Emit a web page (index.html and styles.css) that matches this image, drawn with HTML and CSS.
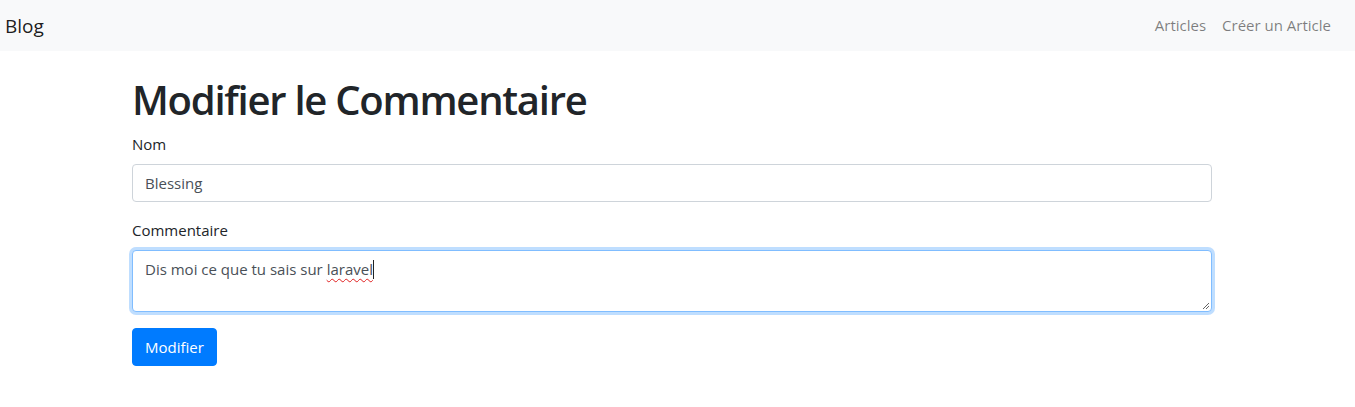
FILE: index.html
```html
<!DOCTYPE html>
<html lang="fr">
<head>
<meta charset="utf-8">
<title>Modifier le Commentaire</title>
<link rel="stylesheet" href="styles.css">
</head>
<body>
<nav class="navbar">
  <a class="brand" href="#">Blog</a>
  <ul class="nav">
    <li><a class="nav-link" href="#">Articles</a></li>
    <li><a class="nav-link" href="#">Créer un Article</a></li>
  </ul>
</nav>
<main class="container">
  <h1 class="title">Modifier le Commentaire</h1>
  <form class="form">
    <div class="form-group">
      <label for="nom">Nom</label>
      <input id="nom" class="form-control" type="text" value="Blessing">
    </div>
    <div class="form-group">
      <label for="commentaire">Commentaire</label>
      <div class="form-control textarea focused"><span>Dis moi ce que tu sais sur </span><span class="misspelled">laravel</span><span class="caret"></span><svg class="grip" width="8" height="8" viewBox="0 0 8 8"><path d="M7 1L1 7M7 4L4 7" stroke="#666" stroke-width="1" fill="none"/></svg></div>
    </div>
    <button type="button" class="btn">Modifier</button>
  </form>
</main>
</body>
</html>
```
FILE: styles.css
```css
* { box-sizing: border-box; }
html, body { margin: 0; padding: 0; }
body {
  font-family: "Open Sans", "Noto Sans", "Liberation Sans", sans-serif;
  font-size: 16px;
  line-height: 1.5;
  color: #212529;
  background: #fff;
}
.navbar {
  display: flex;
  align-items: center;
  justify-content: space-between;
  height: 51px;
  background: #f8f9fa;
  padding: 0 16px 0 5px;
}
.brand {
  font-size: 19px;
  color: rgba(0,0,0,.9);
  text-decoration: none;
  line-height: 30px;
}
.nav {
  display: flex;
  list-style: none;
  margin: 0;
  padding: 0;
}
.nav-link {
  display: block;
  padding: 8px 8px;
  font-size: 15px;
  color: rgba(0,0,0,.5);
  text-decoration: none;
}
.container {
  width: 1080px;
  margin: 25px 0 0 132px;
}
.title {
  font-size: 40px;
  font-weight: 600;
  line-height: 48px;
  margin: 0 0 8px;
  letter-spacing: -1.25px;
}
.form-group { margin-bottom: 16px; }
label {
  display: block;
  margin-bottom: 8px;
  font-size: 15px;
  line-height: 24px;
}
.form-control {
  display: block;
  width: 100%;
  height: 38px;
  padding: 6px 12px;
  font-family: inherit;
  font-size: 15px;
  line-height: 24px;
  color: #495057;
  background: #fff;
  border: 1px solid #ced4da;
  border-radius: 4px;
}
.textarea {
  position: relative;
  height: 62px;
}
.focused {
  border-color: #80bdff;
  box-shadow: 0 0 0 3px rgba(0,123,255,.25);
}
.misspelled {
  text-decoration: underline wavy #e02020;
  text-decoration-thickness: 1px;
  text-underline-offset: 3px;
}
.caret {
  display: inline-block;
  width: 1px;
  height: 19px;
  background: #222;
  vertical-align: -4px;
}
.grip {
  position: absolute;
  right: 1px;
  bottom: 1px;
}
.btn {
  display: block;
  height: 38px;
  padding: 6px 12px;
  font-family: inherit;
  font-size: 15px;
  line-height: 24px;
  color: #fff;
  background: #007bff;
  border: 1px solid #007bff;
  border-radius: 4px;
}
```
